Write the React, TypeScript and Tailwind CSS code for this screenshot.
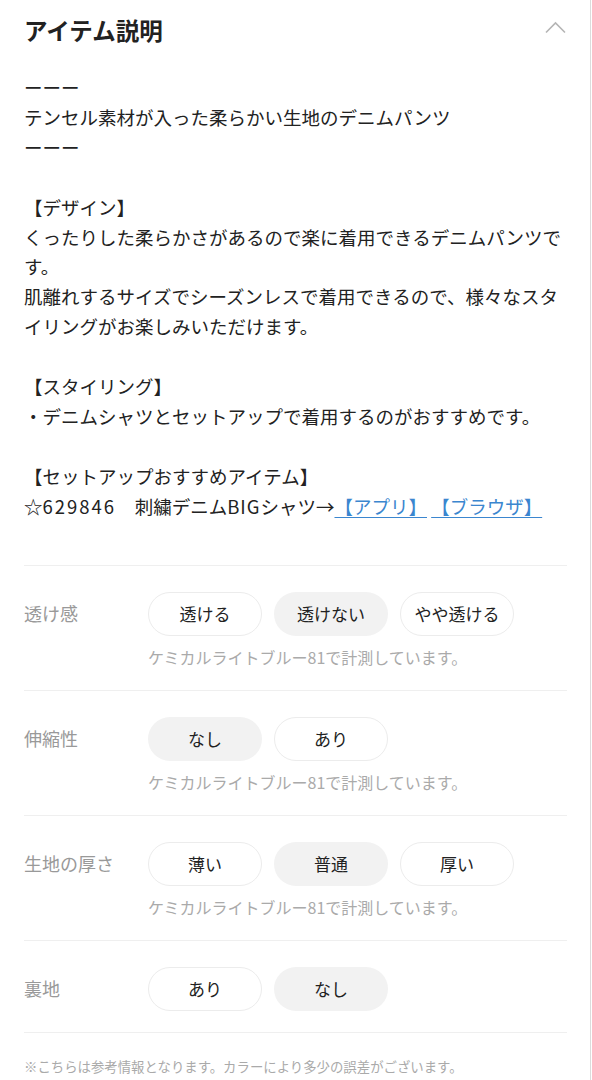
const FONT = { fontFamily: '"Noto Sans CJK JP", "Noto Sans", sans-serif' };

type Attr = {
  label: string;
  options: string[];
  selected: string;
  note?: string;
};

const attrs: Attr[] = [
  { label: '透け感', options: ['透ける', '透けない', 'やや透ける'], selected: '透けない', note: 'ケミカルライトブルー81で計測しています。' },
  { label: '伸縮性', options: ['なし', 'あり'], selected: 'なし', note: 'ケミカルライトブルー81で計測しています。' },
  { label: '生地の厚さ', options: ['薄い', '普通', '厚い'], selected: '普通', note: 'ケミカルライトブルー81で計測しています。' },
  { label: '裏地', options: ['あり', 'なし'], selected: 'なし' },
];

export default function App() {
  return (
    <div style={FONT} className="w-[591px] min-h-[1080px] bg-white border-r border-[#dcdcdc] pl-6 pr-[23px] text-[#222]">
      {/* Header */}
      <div className="flex items-center justify-between pt-[13px]">
        <h2 className="text-[23.5px] leading-[35px] font-bold">アイテム説明</h2>
        <svg width="21" height="13" viewBox="0 0 21 13" fill="none" className="mr-[1px] -mt-[7px]">
          <path d="M1 11.5 L10.5 2 L20 11.5" stroke="#b5b5b5" strokeWidth="1.6" />
        </svg>
      </div>

      {/* Description */}
      <div className="mt-[25px] text-[18.5px] leading-[29.9px]">
        <p>ーーー</p>
        <p>テンセル素材が入った柔らかい生地のデニムパンツ</p>
        <p>ーーー</p>
        <p>&nbsp;</p>
        <p>【デザイン】</p>
        <p>くったりした柔らかさがあるので楽に着用できるデニムパンツです。</p>
        <p>肌離れするサイズでシーズンレスで着用できるので、様々なスタイリングがお楽しみいただけます。</p>
        <p>&nbsp;</p>
        <p>【スタイリング】</p>
        <p>・デニムシャツとセットアップで着用するのがおすすめです。</p>
        <p>&nbsp;</p>
        <p>【セットアップおすすめアイテム】</p>
        <p>
          ☆<span className="tracking-[2px]">629846</span>　刺繍デニム<span className="tracking-[1px]">BIG</span>シャツ→
          <a className="text-[#3b86cf] underline underline-offset-[3px]">【アプリ】</a>{' '}
          <a className="text-[#3b86cf] underline underline-offset-[3px]">【ブラウザ】</a>
        </p>
      </div>

      {/* Attributes */}
      <div className="mt-[43px] border-t border-[#efefef]">
        {attrs.map((a) => (
          <div key={a.label} className="flex border-b border-[#efefef] pt-[26px] pb-[21px]">
            <div className="w-[124px] shrink-0 h-[44px] flex items-center text-[18px] text-[#999]">{a.label}</div>
            <div>
              <div className="flex gap-3">
                {a.options.map((o) => (
                  <div
                    key={o}
                    className={`w-[114px] h-[44px] rounded-full flex items-center justify-center text-[17px] text-[#222] ${
                      o === a.selected ? 'bg-[#f2f2f2]' : 'bg-white border border-[#ececec]'
                    }`}
                  >
                    {o}
                  </div>
                ))}
              </div>
              {a.note && <p className="mt-[10px] text-[16px] leading-[23px] text-[#aaa]">{a.note}</p>}
            </div>
          </div>
        ))}
      </div>

      <p className="mt-[23px] text-[13.4px] leading-[20px] text-[#aaa]">※こちらは参考情報となります。カラーにより多少の誤差がございます。</p>
    </div>
  );
}
